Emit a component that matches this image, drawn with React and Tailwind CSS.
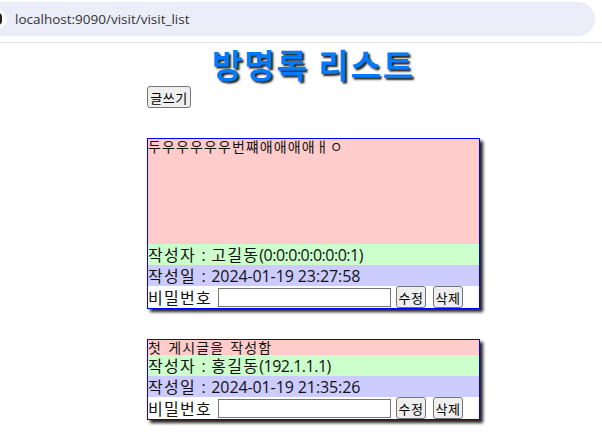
const KR = { fontFamily: '"Noto Sans CJK KR", "Noto Sans", sans-serif' };
const LAT = { fontFamily: '"Open Sans", "Noto Sans CJK KR", sans-serif' };

function Ko({ children }) {
  return <span className="tracking-[1.3px]" style={KR}>{children}</span>;
}

function Card({ body, bodyClass, author, name, date }) {
  return (
    <div className="w-[333px] border border-[#0000ff] shadow-[3px_3px_3px_#222] bg-white text-[16px] leading-[21px] text-[#111]" style={KR}>
      <div className={`bg-[#ffcccc] text-[14px] leading-[15px] tracking-[1.1px] [word-spacing:2px] whitespace-nowrap ${bodyClass}`}>{body}</div>
      <div className="h-[21px] bg-[#ccffcc] whitespace-nowrap tracking-[-0.1px]" style={LAT}>
        <Ko>작성자</Ko><span className="px-[1.5px]"> : </span><Ko>{name}</Ko><span className="tracking-[-0.5px]">{author}</span>
      </div>
      <div className="h-[21px] bg-[#ccccff] whitespace-nowrap tracking-[-0.1px]" style={LAT}>
        <Ko>작성일</Ko><span className="px-[1.5px]"> : </span>{date}
      </div>
      <div className="h-[22px] flex items-center">
        <span className="w-[70px] tracking-[1.3px]">비밀번호</span>
        <input className="w-[173px] h-[19px] border border-[#767676] bg-white" />
        <button className="ml-[5px] w-[30px] h-[22px] border border-[#767676] rounded-[3px] bg-[#efefef] text-[13px] tracking-[0.6px] leading-none text-black whitespace-nowrap">수정</button>
        <button className="ml-[7px] w-[30px] h-[22px] border border-[#767676] rounded-[3px] bg-[#efefef] text-[13px] tracking-[0.6px] leading-none text-black whitespace-nowrap">삭제</button>
      </div>
    </div>
  );
}

export default function App() {
  return (
    <div className="w-[602px] h-[441px] bg-white overflow-hidden">
      <div className="h-[43px] border-b border-[#e2e2e2] pt-[2px]">
        <div className="relative h-[34px] w-[595px] bg-[#ebeef8] rounded-r-[17px] flex items-center pl-[15px] text-[13.5px] text-[#333]" style={{ fontFamily: '"Open Sans", sans-serif' }}>
          <span className="absolute left-[-11px] top-[8px] w-[18px] h-[18px] rounded-full bg-white flex items-center justify-center">
            <span className="w-[8px] h-[12px] rounded-full bg-[#222]"></span>
          </span>
          localhost:9090/visit/visit_list
        </div>
      </div>
      <div className="ml-[147px] w-[333px]">
        <h1 className="h-[43px] text-center text-[33px] leading-[42px] tracking-[1.9px] font-bold text-[#007bff] [text-shadow:2px_2px_2px_#222]" style={KR}>방명록 리스트</h1>
        <button className="block w-[44px] h-[22px] border border-[#767676] rounded-[3px] bg-[#efefef] text-[13px] tracking-[0.6px] leading-none text-black whitespace-nowrap" style={KR}>글쓰기</button>
        <div className="mt-[30px]">
          <Card body="두우우우우우번쨰애애애애ㅐㅇ" bodyClass="h-[105px]" name="고길동" author="(0:0:0:0:0:0:0:1)" date="2024-01-19 23:27:58" />
        </div>
        <div className="mt-[30px]">
          <Card body="첫 게시글을 작성함" bodyClass="h-[15px]" name="홍길동" author="(192.1.1.1)" date="2024-01-19 21:35:26" />
        </div>
      </div>
    </div>
  );
}
